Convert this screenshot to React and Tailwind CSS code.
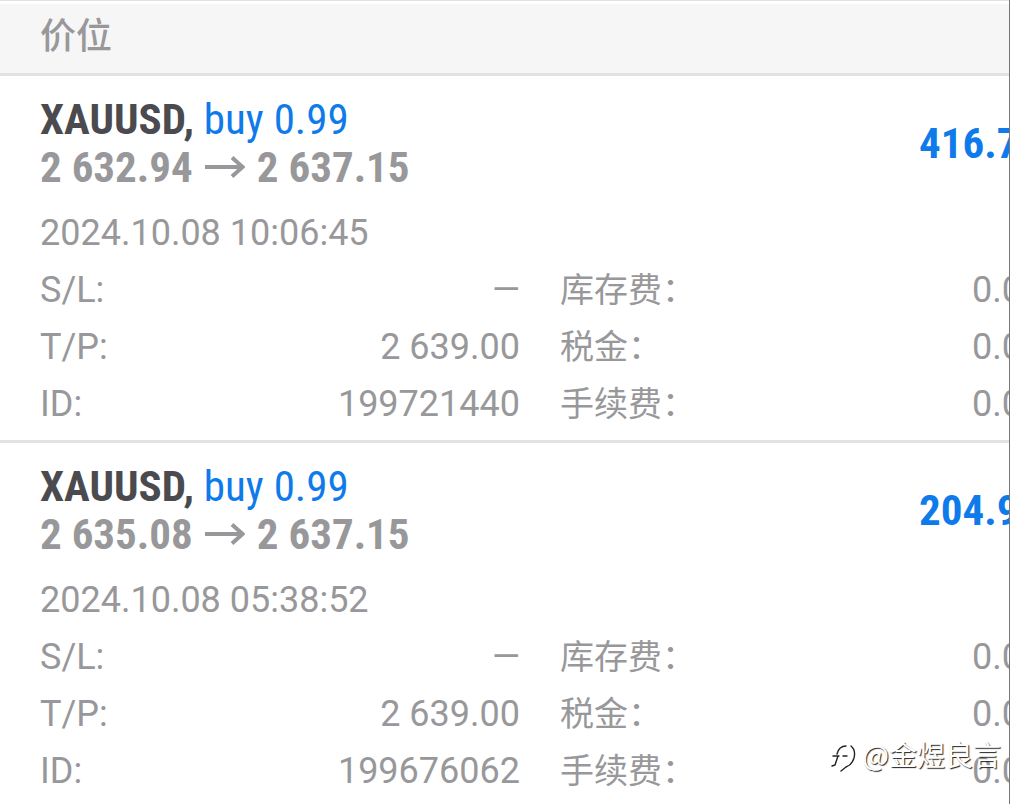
const trades = [
  {
    symbol: 'XAUUSD',
    side: 'buy 0.99',
    open: '2 632.94',
    close: '2 637.15',
    profit: '416.79',
    time: '2024.10.08 10:06:45',
    rows: [
      ['S/L:', '—', '库存费：', '0.00'],
      ['T/P:', '2 639.00', '税金：', '0.00'],
      ['ID:', '199721440', '手续费：', '0.00'],
    ],
  },
  {
    symbol: 'XAUUSD',
    side: 'buy 0.99',
    open: '2 635.08',
    close: '2 637.15',
    profit: '204.93',
    time: '2024.10.08 05:38:52',
    rows: [
      ['S/L:', '—', '库存费：', '0.00'],
      ['T/P:', '2 639.00', '税金：', '0.00'],
      ['ID:', '199676062', '手续费：', '0.00'],
    ],
  },
];

function Arrow() {
  return (
    <svg className="mx-3 h-6 w-10 shrink-0" viewBox="0 0 40 24" fill="none" stroke="currentColor" strokeWidth="4" aria-hidden="true">
      <path d="M0 12H37M27 2.5L37.5 12L27 21.5" />
    </svg>
  );
}

function Trade({ trade }) {
  return (
    <article className="overflow-hidden border-b-3 border-[#e2e2e3] pt-[19px] pl-10">
      <div className="flex items-center justify-between font-['Roboto_Condensed','Roboto',sans-serif] text-[43px] leading-12">
        <div>
          <h2 className="font-bold text-[#4a4a4f]">
            {trade.symbol}, <span className="font-normal text-[#0f7bea]">{trade.side}</span>
          </h2>
          <p className="flex items-center font-bold text-[#98989b]">
            {trade.open}
            <Arrow />
            {trade.close}
          </p>
        </div>
        <p className="w-[90px] whitespace-nowrap font-bold text-[#0f7bea]">{trade.profit}</p>
      </div>
      <p className="mt-[14px] leading-[57px]">{trade.time}</p>
      <dl className="pb-[7px] leading-[57px]">
        {trade.rows.map(([label, value, feeLabel, fee]) => (
          <div key={label} className="flex">
            <dt>{label}</dt>
            <dd className="ml-auto">{value}</dd>
            <dt className="ml-10 flex-none basis-[412px] text-[34px]">{feeLabel}</dt>
            <dd className="w-[37px] whitespace-nowrap">{fee}</dd>
          </div>
        ))}
      </dl>
    </article>
  );
}

function Watermark() {
  return (
    <div className="absolute right-2 bottom-9 flex items-center gap-1.5 font-['Noto_Sans_CJK_SC',sans-serif] text-[28px] leading-10 text-white [text-shadow:1px_1px_1px_#222]">
      <svg className="mt-2 h-8 w-7" viewBox="0 0 28 32" fill="none" strokeLinecap="round" strokeLinejoin="round" aria-hidden="true">
        <path d="M4 24L7 14Q9 4 16 5Q25 5 23 16Q21 24 13 28" stroke="#fff" strokeWidth="4" />
        <path d="M3 24L6 23L9 14M4 14H10M8 12Q10 4 17 4M14 14H18M22 4Q27 8 25 16Q23 23 17 25L12 29" stroke="#222" strokeWidth="1.4" />
      </svg>
      <span>@金煜良言</span>
    </div>
  );
}

export default function App() {
  return (
    <main className="relative overflow-hidden border-r border-[#77777a] bg-white font-['Roboto','Noto_Sans_CJK_SC',sans-serif] text-[36px] text-[#98989b]">
      <header className="border-t border-b-3 border-[#e2e2e3] bg-[#f6f6f6]">
        <h1 className="border-t-3 border-white pt-px pb-[3px] pl-10 text-[36px] leading-[65px] font-medium">价位</h1>
      </header>
      {trades.map((trade) => (
        <Trade key={trade.time} trade={trade} />
      ))}
      <Watermark />
    </main>
  );
}
